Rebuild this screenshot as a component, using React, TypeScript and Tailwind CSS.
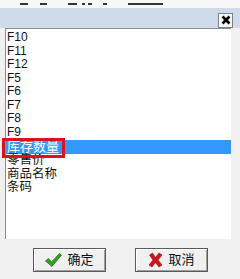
import React from 'react'

const items = ['F10', 'F11', 'F12', 'F5', 'F6', 'F7', 'F8', 'F9', '库存数量', '零售价', '商品名称', '条码']

const CheckIcon = () => (
  <svg width="19" height="16" viewBox="0 0 18 16">
    <path d="M1 9 L4 6.5 L7 10 L15 1.5 L17 3 L7.5 14.5 Z" fill="#3a9a2a" stroke="#1f6e14" strokeWidth="0.8" />
  </svg>
)

const CrossIcon = () => (
  <svg width="17" height="16" viewBox="0 0 16 16">
    <path d="M2 3 L5 1 L8 5.5 L11.5 1 L14.5 3 L10.5 8 L14.5 13 L11.5 15 L8 10.5 L4.5 15 L1.5 13 L5.5 8 Z" fill="#d0141a" stroke="#8a0a0e" strokeWidth="0.6" />
  </svg>
)

const DialogButton: React.FC<{ icon: React.ReactNode; label: string }> = ({ icon, label }) => (
  <button className="w-[73px] h-[24px] flex items-center justify-center gap-[4px] bg-[#f0f0f0] border border-[#5a5a5a] shadow-[inset_1px_1px_0_#ffffff,inset_-1px_-1px_0_#a0a0a0] text-[13px] text-[#111]">
    {icon}
    <span>{label}</span>
  </button>
)

export default function App() {
  return (
    <div className="relative w-[240px] h-[279px] overflow-hidden bg-[#f0f0f0] font-['Liberation_Sans','Noto_Sans_CJK_SC',sans-serif]">
      <div className="h-[8px] bg-[#f7f7f7] flex items-start pt-[3px]">
        <div className="ml-[20px] w-[8px] h-[2px] bg-[#333]" />
        <div className="ml-[12px] w-[7px] h-[2px] bg-[#333]" />
        <div className="ml-[21px] w-[9px] h-[2px] bg-[#333]" />
        <div className="ml-[5px] w-[3px] h-[2px] bg-[#333]" />
        <div className="ml-[3px] w-[4px] h-[2px] bg-[#333]" />
        <div className="ml-[11px] w-[4px] h-[2px] bg-[#333]" />
        <div className="ml-[21px] w-[35px] h-[2px] bg-[#333]" />
      </div>
      <div className="h-[20px] bg-[#cddbea] flex items-center justify-end pr-[7px]">
        <button className="w-[15px] h-[15px] mt-[4px] flex items-center justify-center bg-[#f4f4f4] border border-[#808080] shadow-[inset_1px_1px_0_#ffffff]">
          <svg width="10" height="10" viewBox="0 0 10 10">
            <path d="M1.5 1.5 L8.5 8.5 M8.5 1.5 L1.5 8.5" stroke="#000" strokeWidth="2.6" />
          </svg>
        </button>
      </div>
      <div className="ml-[5px] mr-[9px] h-[211px] bg-white border-t border-l border-[#8c8c8c] pt-[2px]">
        {items.map((item, i) => (
          <div
            key={item}
            className={
              i === 8
                ? 'h-[14px] mt-[1px] leading-[14px] pl-[1px] text-[13px] bg-[#3399ff] text-white'
                : i > 8
                  ? 'h-[13.5px] leading-[13.5px] pl-[1px] text-[12.5px] text-[#111]'
                  : 'h-[13.5px] leading-[13.5px] pl-[1px] text-[12px] text-[#111]'
            }
          >
            {item}
          </div>
        ))}
      </div>
      <div className="flex justify-center gap-[29px] pt-[9px]">
        <DialogButton icon={<CheckIcon />} label="确定" />
        <DialogButton icon={<CrossIcon />} label="取消" />
      </div>
      <div className="absolute left-[2px] top-[138px] w-[63px] h-[20px] border-[3px] border-[#e01020]" />
    </div>
  )
}
